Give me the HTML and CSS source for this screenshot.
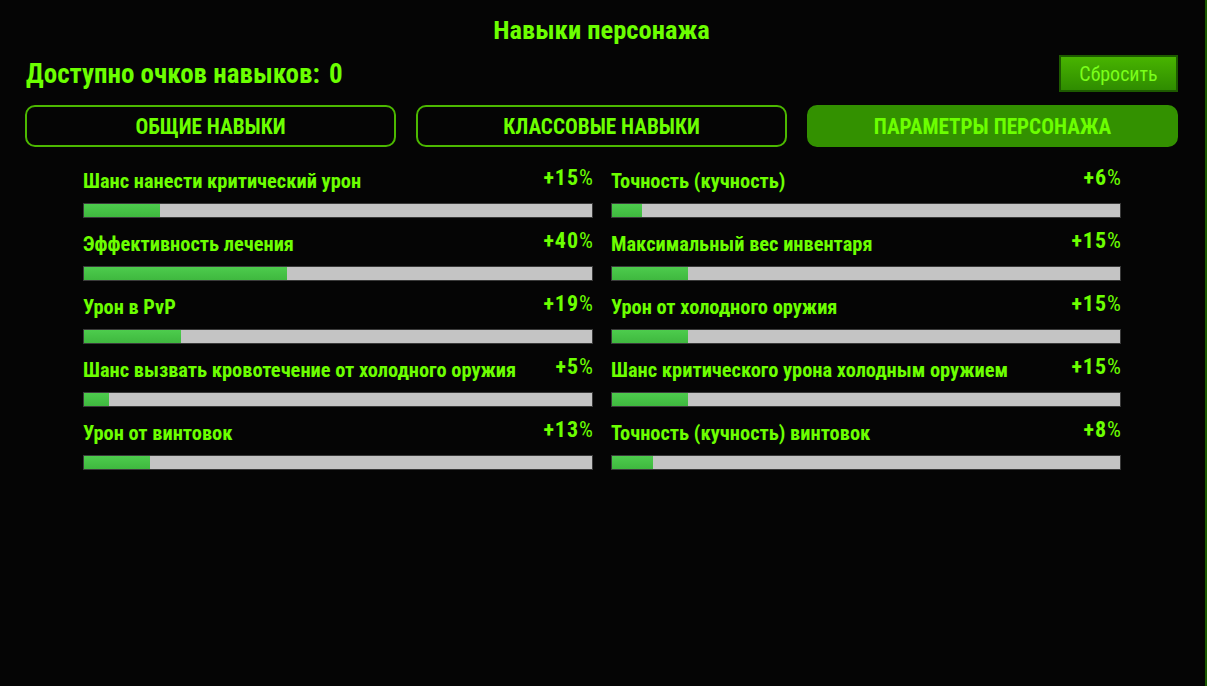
FILE: index.html
```html
<!DOCTYPE html>
<html lang="ru">
  <head>
    <meta charset="utf-8">
    <title>Навыки персонажа</title>
    <link rel="stylesheet" href="styles.css">
  </head>
  <body>
    <div class="panel">
      <h1 class="title">Навыки персонажа</h1>
      <div class="points-row">
        <div class="points">Доступно очков навыков: <span class="points-value">0</span></div>
        <button class="reset">Сбросить</button>
      </div>
      <div class="tabs">
        <div class="tab">ОБЩИЕ НАВЫКИ</div>
        <div class="tab">КЛАССОВЫЕ НАВЫКИ</div>
        <div class="tab active">ПАРАМЕТРЫ ПЕРСОНАЖА</div>
      </div>
      <div class="stats">
        <div class="stat">
          <div class="stat-head"><span class="name">Шанс нанести критический урон</span><span class="val">+15<span class="pct">%</span></span></div>
          <div class="bar"><div class="fill" style="width: 15%"></div></div>
        </div>
        <div class="stat">
          <div class="stat-head"><span class="name">Точность (кучность)</span><span class="val">+6<span class="pct">%</span></span></div>
          <div class="bar"><div class="fill" style="width: 6%"></div></div>
        </div>
        <div class="stat">
          <div class="stat-head"><span class="name">Эффективность лечения</span><span class="val">+40<span class="pct">%</span></span></div>
          <div class="bar"><div class="fill" style="width: 40%"></div></div>
        </div>
        <div class="stat">
          <div class="stat-head"><span class="name">Максимальный вес инвентаря</span><span class="val">+15<span class="pct">%</span></span></div>
          <div class="bar"><div class="fill" style="width: 15%"></div></div>
        </div>
        <div class="stat">
          <div class="stat-head"><span class="name">Урон в PvP</span><span class="val">+19<span class="pct">%</span></span></div>
          <div class="bar"><div class="fill" style="width: 19%"></div></div>
        </div>
        <div class="stat">
          <div class="stat-head"><span class="name">Урон от холодного оружия</span><span class="val">+15<span class="pct">%</span></span></div>
          <div class="bar"><div class="fill" style="width: 15%"></div></div>
        </div>
        <div class="stat">
          <div class="stat-head"><span class="name">Шанс вызвать кровотечение от холодного оружия</span><span class="val">+5<span class="pct">%</span></span></div>
          <div class="bar"><div class="fill" style="width: 5%"></div></div>
        </div>
        <div class="stat">
          <div class="stat-head"><span class="name">Шанс критического урона холодным оружием</span><span class="val">+15<span class="pct">%</span></span></div>
          <div class="bar"><div class="fill" style="width: 15%"></div></div>
        </div>
        <div class="stat">
          <div class="stat-head"><span class="name">Урон от винтовок</span><span class="val">+13<span class="pct">%</span></span></div>
          <div class="bar"><div class="fill" style="width: 13%"></div></div>
        </div>
        <div class="stat">
          <div class="stat-head"><span class="name">Точность (кучность) винтовок</span><span class="val">+8<span class="pct">%</span></span></div>
          <div class="bar"><div class="fill" style="width: 8%"></div></div>
        </div>
      </div>
    </div>
  </body>
</html>
```

FILE: styles.css
```css
html, body {
  margin: 0;
  height: 100%;
  background: #050505;
}

body {
  font-family: "Roboto Condensed", Roboto, "Liberation Sans", sans-serif;
  color: #6cff00;
}

.panel {
  box-sizing: border-box;
  height: 100%;
  padding: 12px 27px 0 25px;
  border-right: 2px solid #1d5a00;
}

.title {
  margin: 0;
  text-align: center;
  font-size: 26.5px;
  font-weight: 700;
  line-height: 36px;
}

.points-row {
  display: flex;
  align-items: center;
  justify-content: space-between;
  margin-top: 7px;
}

.points {
  font-size: 27px;
  font-weight: 700;
  padding-left: 1px;
}

.points-value {
  margin-left: 3px;
}

.reset {
  width: 119px;
  height: 37px;
  border: 2px solid #1d5a00;
  background: linear-gradient(#48b400, #2f8c00);
  color: #7aff1a;
  font-family: inherit;
  font-size: 20px;
  padding: 0;
}

.tabs {
  display: grid;
  grid-template-columns: repeat(3, 1fr);
  gap: 20px;
  margin-top: 13px;
}

.tab {
  height: 42px;
  box-sizing: border-box;
  border: 2px solid #4cb800;
  border-radius: 10px;
  display: flex;
  align-items: center;
  justify-content: center;
  font-size: 21.2px;
  font-weight: 700;
}

.tab.active {
  background: #339100;
  border-color: #339100;
}

.stats {
  display: grid;
  grid-template-columns: 510px 510px;
  column-gap: 18px;
  row-gap: 13px;
  margin: 21px 0 0 58px;
}

.stat-head {
  display: flex;
  justify-content: space-between;
  align-items: flex-start;
  font-weight: 700;
  height: 35px;
}

.stat-head .name {
  font-size: 20.4px;
  line-height: 27px;
}

/* value sits a touch higher than the name */
.stat-head .val {
  font-size: 22px;
  line-height: 20px;
  letter-spacing: 1px;
  margin-right: -1px;
}

.pct {
  font-weight: 400;
}

.bar {
  height: 13px;
  border: 1px solid #3a3a3a;
  background: #c4c4c4;
}

.fill {
  height: 100%;
  background: linear-gradient(#4dcc4d, #3fb83f);
}
```
